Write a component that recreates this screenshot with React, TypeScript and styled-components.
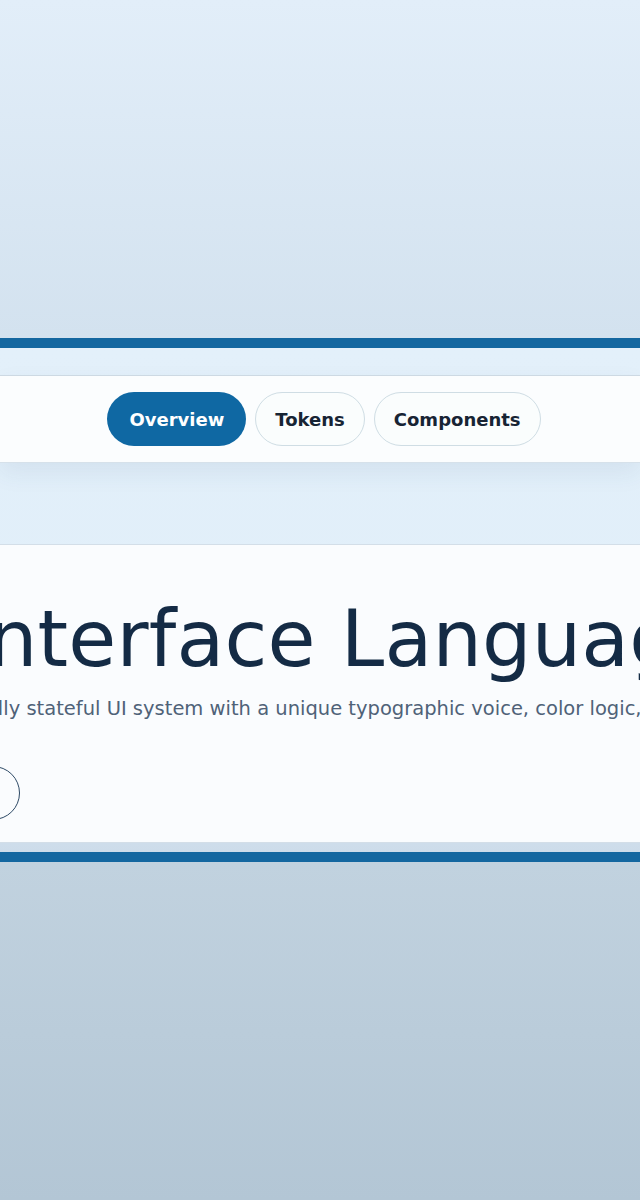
import React from 'react';
import styled, { createGlobalStyle } from 'styled-components';

const GlobalStyle = createGlobalStyle`
  html,
  body {
    margin: 0;
    padding: 0;
  }

  body {
    font-family: 'DejaVu Sans', 'Noto Sans', sans-serif;
    background: linear-gradient(
      180deg,
      #e2eef9 0%,
      #d3e2ef 28%,
      #c1d2df 72%,
      #b3c6d5 100%
    );
    min-height: 100vh;
    overflow-x: hidden;
  }
`;

const tabs = ['Overview', 'Tokens', 'Components'];

const App: React.FC = () => {
  const [active, setActive] = React.useState('Overview');

  return (
    <>
      <GlobalStyle />
      <Page>
        <Stage>
          <NavBand>
            <TabRow>
              {tabs.map((tab) => (
                <Tab
                  key={tab}
                  $active={tab === active}
                  onClick={() => setActive(tab)}
                >
                  {tab}
                </Tab>
              ))}
            </TabRow>
          </NavBand>
          <Hero>
            <Title>Interface Language</Title>
            <Lede>
              A visually stateful UI system with a unique typographic voice,
              color logic, and motion.
            </Lede>
            <Actions>
              <GhostButton>Read the docs</GhostButton>
            </Actions>
          </Hero>
        </Stage>
      </Page>
    </>
  );
};

export default App;

const Page = styled.main`
  min-height: 100vh;
  display: flex;
  flex-direction: column;
  justify-content: center;
`;

const Stage = styled.section`
  border-top: 10px solid #1467a0;
  border-bottom: 10px solid #1467a0;
  background: linear-gradient(
    180deg,
    #e3f0fa 0%,
    #e0eef9 70%,
    #cddcea 100%
  );
  padding: 27px 0 9px;
  display: flex;
  flex-direction: column;
  gap: 81px;
  overflow: hidden;
`;

const NavBand = styled.nav`
  background: #fbfdfe;
  border-top: 1px solid #cdd9e3;
  border-bottom: 1px solid #d6e1ea;
  padding: 16px 0 16px 8px;
  box-shadow: 0 10px 22px rgba(40, 80, 120, 0.08);
`;

const TabRow = styled.div`
  display: flex;
  justify-content: center;
  gap: 9px;
`;

const Tab = styled.button<{ $active?: boolean }>`
  height: 54px;
  padding: 0 ${({ $active }) => ($active ? '22px' : '19px')};
  border-radius: 27px;
  border: ${({ $active }) =>
    $active ? '0' : '1px solid #cfdde4'};
  background: ${({ $active }) => ($active ? '#0f68a3' : '#fafdfd')};
  color: ${({ $active }) => ($active ? '#ffffff' : '#172434')};
  font-family: 'DejaVu Sans', sans-serif;
  font-weight: 700;
  font-size: 18px;
  cursor: pointer;
`;

const Hero = styled.section`
  box-sizing: border-box;
  width: 1060px;
  margin-left: -184px;
  background: #fafcfe;
  border-top: 1px solid #d3dee8;
  border-bottom: 1px solid #d3dee8;
  padding: 52px 24px 22px;
  display: flex;
  flex-direction: column;
`;

const Title = styled.h1`
  margin: 0;
  font-family: 'DejaVu Sans', sans-serif;
  font-weight: 400;
  font-size: 78px;
  line-height: 1.1;
  letter-spacing: 0.2px;
  color: #142b45;
  text-align: center;
  white-space: nowrap;
`;

const Lede = styled.p`
  margin: 11px 0 0;
  font-size: 19.5px;
  line-height: 1.5;
  color: #4f6278;
  text-align: center;
  white-space: nowrap;
`;

const Actions = styled.div`
  display: flex;
  justify-content: flex-start;
  gap: 12px;
  margin-top: 42px;
`;

const GhostButton = styled.button`
  height: 54px;
  width: 180px;
  border-radius: 27px;
  border: 1.5px solid #2e4a66;
  background: transparent;
  color: #142b45;
  font-family: 'DejaVu Sans', sans-serif;
  font-size: 16px;
  font-weight: 700;
`;
